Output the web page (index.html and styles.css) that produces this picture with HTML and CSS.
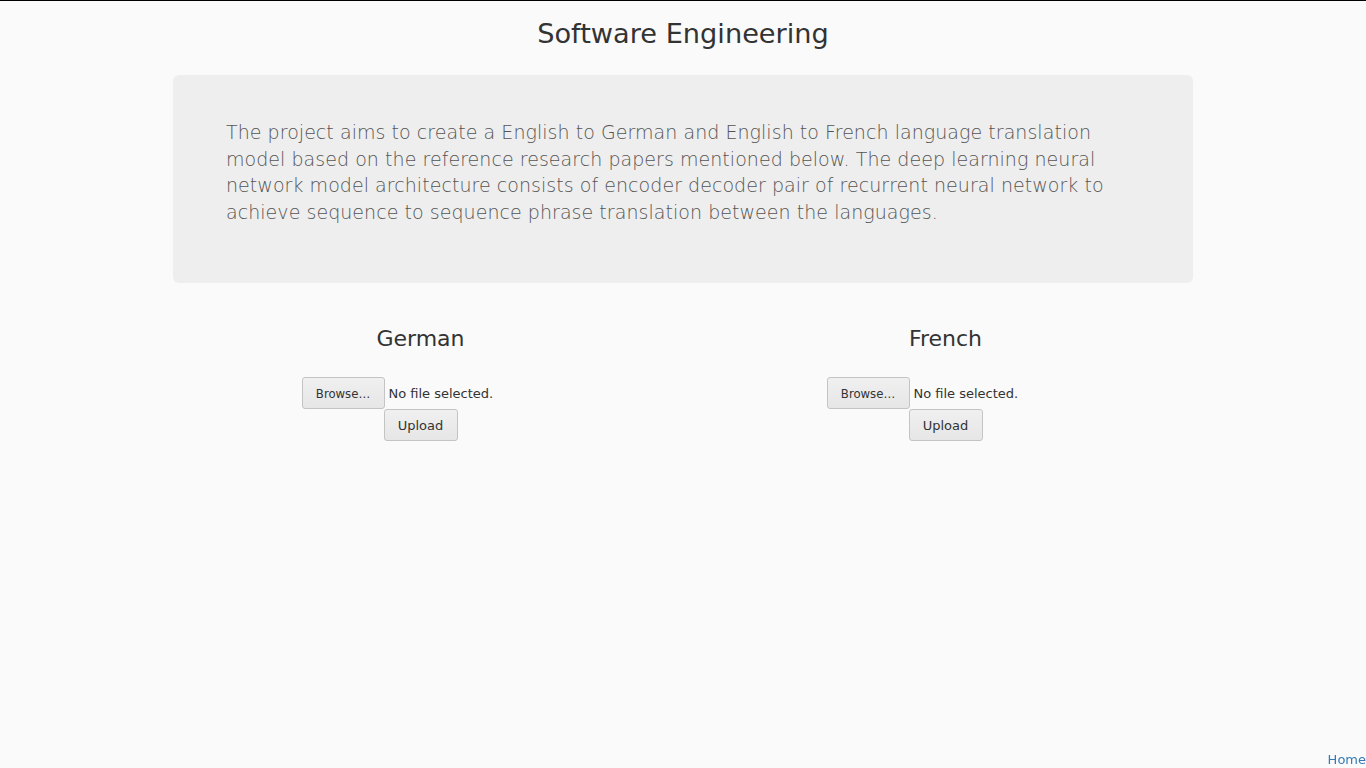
FILE: index.html
```html
<!DOCTYPE html>
<html lang="en">
<head>
<meta charset="utf-8">
<title>Software Engineering</title>
<link rel="stylesheet" href="styles.css">
</head>
<body>
<div class="page">
  <h1 class="title">Software Engineering</h1>
  <div class="container">
    <div class="jumbotron">
      <p>The project aims to create a English to German and English to French language translation model based on the reference research papers mentioned below. The deep learning neural network model architecture consists of encoder decoder pair of recurrent neural network to achieve sequence to sequence phrase translation between the languages.</p>
    </div>
    <div class="row">
      <div class="col">
        <h3 class="lang">German</h3>
        <form class="upload-form">
          <span class="file-input"><button type="button" class="btn btn-browse">Browse…</button><span class="file-label">No file selected.</span></span>
          <button type="button" class="btn btn-upload">Upload</button>
        </form>
      </div>
      <div class="col">
        <h3 class="lang">French</h3>
        <form class="upload-form">
          <span class="file-input"><button type="button" class="btn btn-browse">Browse…</button><span class="file-label">No file selected.</span></span>
          <button type="button" class="btn btn-upload">Upload</button>
        </form>
      </div>
    </div>
  </div>
</div>
<a class="home-link" href="#">Home</a>
</body>
</html>
```
FILE: styles.css
```css
html, body {
  margin: 0;
  padding: 0;
}
body {
  background: #fafafa;
  font-family: "DejaVu Sans", "Liberation Sans", sans-serif;
  color: #333;
  min-height: 768px;
}
.page {
  border-top: 1px solid #000;
}
.title {
  margin: 18px 0 0;
  font-size: 27.2px;
  font-weight: 400;
  line-height: 30px;
  text-align: center;
  color: #333;
}
.container {
  width: 1020px;
  margin: 26px auto 0;
}
.jumbotron {
  background: #eeeeee;
  border-radius: 6px;
  padding: 44px 53px 58px;
}
.jumbotron p {
  margin: 0;
  font-size: 19px;
  font-weight: 200;
  line-height: 26.6px;
  letter-spacing: 0.05px;
  color: #555;
}
.row {
  display: grid;
  grid-template-columns: 1fr 1fr;
  margin: 0 -15px;
  padding-top: 42px;
}
.col {
  padding: 0 15px;
  text-align: center;
}
.lang {
  margin: 0;
  font-size: 22px;
  font-weight: 400;
  line-height: 28px;
  color: #333;
}
.upload-form {
  margin-top: 24px;
  font-size: 13px;
}
.file-input {
  display: inline-flex;
  align-items: center;
  width: 238px;
  text-align: left;
}
.file-label {
  margin-left: 4px;
  color: #333;
}
.btn {
  display: inline-block;
  box-sizing: border-box;
  height: 32px;
  font-family: "DejaVu Sans", "Liberation Sans", sans-serif;
  font-size: 13px;
  color: #333;
  background: linear-gradient(#f0f0f0, #e6e6e6);
  border: 1px solid #c4c4c4;
  border-radius: 3px;
  padding: 0;
  vertical-align: top;
}
.btn-browse {
  width: 83px;
  flex: none;
  font-family: "DejaVu Sans Condensed", "DejaVu Sans", sans-serif;
  font-stretch: condensed;
}
.btn-upload {
  display: block;
  width: 74px;
  margin: 0 auto;
}
.home-link {
  position: fixed;
  right: 0;
  bottom: 1px;
  font-size: 13px;
  color: #337ab7;
  text-decoration: none;
}
```
